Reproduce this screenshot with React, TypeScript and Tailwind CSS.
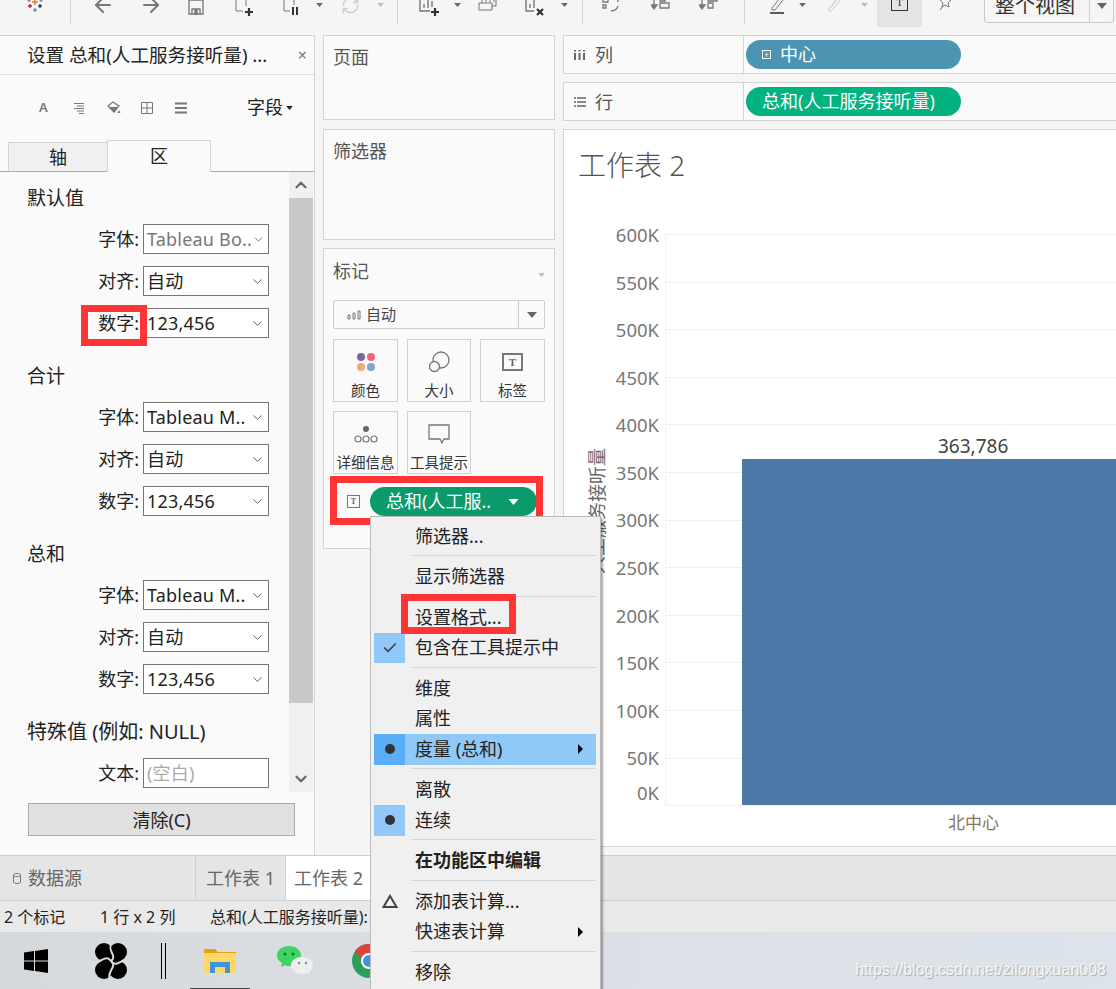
import { ArrowLeft, ArrowRight, Check, ChevronDown, ChevronUp, RefreshCw } from 'lucide-react';
import type { ReactNode } from 'react';

const ticks = ['600K', '550K', '500K', '450K', '400K', '350K', '300K', '250K', '200K', '150K', '100K', '50K', '0K'];

const formatGroups = [
  { title: '默认值', font: 'Tableau Bo..', muted: true },
  { title: '合计', font: 'Tableau M..', muted: false },
  { title: '总和', font: 'Tableau M..', muted: false },
];

function Caret({ className }: { className: string }) {
  return (
    <svg viewBox="0 0 10 6" className={className} fill="currentColor">
      <path d="M0 0h10L5 6z" />
    </svg>
  );
}

function Tool({ className, children }: { className: string; children?: ReactNode }) {
  return <div className={`flex items-center justify-center h-[24px] shrink-0 text-[#777] ${className}`}>{children}</div>;
}

function Divider() {
  return <div className="w-px h-[24px] bg-[#d2d2d2] shrink-0 self-start" />;
}

function Toolbar() {
  return (
    <div className="h-[35px] shrink-0 overflow-hidden flex items-start relative">
      <div className="flex items-start -mt-[7px] pt-[7px]">
        <Tool className="w-[70px] -mt-[7px]">
          <svg width="18" height="18" viewBox="0 0 18 18" strokeWidth="1.4">
            <path d="M9 3v6M6 6h6" stroke="#e8762b" />
            <path d="M4 8v4M2 10h4" stroke="#c72035" />
            <path d="M14 8v4M12 10h4" stroke="#1f447e" />
            <path d="M9 12v4M7 14h4" stroke="#7099a6" />
            <path d="M3 3v3M1.5 4.5h3M15 3v3M13.5 4.5h3" stroke="#8a8a9a" />
          </svg>
        </Tool>
        <Divider />
        <Tool className="w-[31px] -mt-[7px] ml-[16px]"><ArrowLeft size={24} strokeWidth={2} /></Tool>
        <Tool className="w-[31px] -mt-[7px] ml-[17px]"><ArrowRight size={24} strokeWidth={2} /></Tool>
        <Tool className="w-[20px] -mt-[5px] ml-[20px]">
          <svg width="16" height="16" viewBox="0 0 16 16" fill="none" stroke="currentColor" strokeWidth="1.3">
            <path d="M1 1h14v14H1zM4 15v-5h8v5" />
            <path d="M7 11h2v4H7z" fill="currentColor" />
          </svg>
        </Tool>
        <Tool className="w-[20px] -mt-[5px] ml-[28px]">
          <svg width="20" height="18" viewBox="0 0 20 18" fill="none" stroke="currentColor">
            <path d="M2 2v11h7M12 2v6" />
            <path d="M11 14h8M15 10v8" stroke="#333" strokeWidth="2.2" />
          </svg>
        </Tool>
        <Tool className="w-[20px] -mt-[5px] ml-[27px]">
          <svg width="20" height="18" viewBox="0 0 20 18" fill="none" stroke="currentColor">
            <path d="M3 2v11h6M13 2v5" />
            <path d="M12 9v8M16 9v8" stroke="#333" strokeWidth="2" />
          </svg>
        </Tool>
        <Tool className="w-[10px] -mt-[7px] ml-[13px]"><Caret className="w-[7px] h-[4px] text-[#666]" /></Tool>
        <Tool className="w-[20px] -mt-[7px] ml-[16px] text-[#d0d0d0]"><RefreshCw size={19} /></Tool>
        <Tool className="w-[10px] -mt-[7px] ml-[15px] text-[#bbb]"><Caret className="w-[7px] h-[4px]" /></Tool>
        <div className="ml-[12px]"><Divider /></div>
        <Tool className="w-[20px] -mt-[4px] ml-[21px]">
          <svg width="20" height="18" viewBox="0 0 20 18" fill="none" stroke="currentColor">
            <path d="M1 1v11h10M5 9V5M9 9V1M13 8V2" strokeWidth="1.4" />
            <path d="M12 13h8M16 9v8" stroke="#333" strokeWidth="2.2" />
          </svg>
        </Tool>
        <Tool className="w-[10px] -mt-[7px] ml-[13px]"><Caret className="w-[7px] h-[4px] text-[#666]" /></Tool>
        <Tool className="w-[20px] -mt-[6px] ml-[16px]">
          <svg width="20" height="16" viewBox="0 0 20 16" fill="none" stroke="currentColor">
            <path d="M1 5h13v7H1zM4 5V1h14v7h-4M8 1V4M12 1V4M16 1V4" />
          </svg>
        </Tool>
        <Tool className="w-[20px] -mt-[4px] ml-[27px]">
          <svg width="20" height="18" viewBox="0 0 20 18" fill="none" stroke="currentColor">
            <path d="M1 1v11h8M5 9V5M9 9V1" strokeWidth="1.4" />
            <path d="M12 10l6 6M18 10l-6 6" stroke="#333" strokeWidth="2.2" />
          </svg>
        </Tool>
        <Tool className="w-[10px] -mt-[7px] ml-[14px]"><Caret className="w-[7px] h-[4px] text-[#666]" /></Tool>
        <div className="ml-[13px]"><Divider /></div>
        <Tool className="w-[20px] -mt-[8px] ml-[18px]">
          <svg width="20" height="18" viewBox="0 0 20 18" fill="none" stroke="currentColor" strokeWidth="1.3">
            <path d="M2 2h5v5H2zM2 10h3v3H2zM10 1c4 0 7 2 7 6M17 11c-1 3-3 5-7 5" />
          </svg>
        </Tool>
        <Tool className="w-[20px] -mt-[8px] ml-[30px]">
          <svg width="20" height="18" viewBox="0 0 20 18" fill="none" stroke="currentColor" strokeWidth="1.3">
            <path d="M3 2v10" />
            <path d="M0 10h6l-3 4z" fill="currentColor" />
            <path d="M9 1h5v5H9zM9 8h9v5H9z" />
          </svg>
        </Tool>
        <Tool className="w-[20px] -mt-[8px] ml-[28px]">
          <svg width="20" height="18" viewBox="0 0 20 18" fill="none" stroke="currentColor" strokeWidth="1.3">
            <path d="M3 2v10" />
            <path d="M0 10h6l-3 4z" fill="currentColor" />
            <path d="M9 1h9v5H9zM9 8h5v5H9z" />
          </svg>
        </Tool>
        <div className="ml-[25px]"><Divider /></div>
        <Tool className="w-[20px] -mt-[6px] ml-[23px]">
          <svg width="20" height="18" viewBox="0 0 20 18" fill="none" stroke="currentColor">
            <path d="M4 11l8-10 3 2-8 10H4z" />
            <path d="M2 16h14" stroke="#333" strokeWidth="1.6" />
          </svg>
        </Tool>
        <Tool className="w-[10px] -mt-[7px] ml-[9px]"><Caret className="w-[7px] h-[4px] text-[#666]" /></Tool>
        <Tool className="w-[20px] -mt-[6px] ml-[17px] text-[#c8c8c8]">
          <svg width="16" height="18" viewBox="0 0 16 18" fill="none" stroke="currentColor">
            <path d="M3 12l7-9c2-2 4 0 3 2l-8 9c-1 1-3 0-2-2l7-8" />
          </svg>
        </Tool>
        <Tool className="w-[10px] -mt-[7px] ml-[15px] text-[#bbb]"><Caret className="w-[7px] h-[4px]" /></Tool>
        <div className="ml-[8px] -mt-[7px] w-[45px] h-[34px] bg-[#e4e4e4] flex items-center justify-center shrink-0">
          <div className="-mt-[16px] w-[17px] h-[17px] border border-[#333] flex items-center justify-center text-[11px] leading-none text-[#333] [font-family:'Liberation_Serif',serif]">T</div>
        </div>
        <Tool className="w-[20px] -mt-[9px] ml-[14px] text-[#666]">
          <svg width="14" height="16" viewBox="0 0 14 16" fill="none" stroke="currentColor">
            <path d="M7 1l1 3 4 1-3 3 1 4-4-2-3 2 1-4-3-3 4-1zM4 11l-3 4" />
          </svg>
        </Tool>
        <div className="ml-[28px] -mt-[7px] w-[130px] h-[30px] border border-[#c8c8c8] rounded-b-[3px] flex items-center shrink-0">
          <div className="w-[104px] pl-[10px] text-[20px] leading-[28px] text-[#333] -mt-[4px] whitespace-nowrap">整个视图</div>
          <div className="flex-1 h-full border-l border-[#d0d0d0] flex justify-center pt-[9px] text-[#666]">
            <Caret className="w-[10px] h-[6px]" />
          </div>
        </div>
      </div>
    </div>
  );
}

function FieldRow({ label, value, muted, placeholder }: { label: string; value: string; muted?: boolean; placeholder?: boolean }) {
  return (
    <div className="flex items-center h-[30px]">
      <span className="w-[139px] text-right text-[18px] text-[#222] whitespace-nowrap">{label}:</span>
      <div className="ml-[4px] w-[126px] h-[30px] bg-white border border-[#767676] flex items-center pl-[3px] pr-[3px]">
        <span className={`flex-1 text-[18px] whitespace-nowrap tracking-[0.2px] ${placeholder ? 'text-[#aaa]' : muted ? 'text-[#777]' : 'text-[#222]'}`}>{value}</span>
        {!placeholder && <ChevronDown size={15} strokeWidth={1.5} className="text-[#555]" />}
      </div>
    </div>
  );
}

function FormatPane() {
  return (
    <div className="w-[315px] shrink-0 bg-[#fafafa] border-t border-r border-[#d4d4d4] flex flex-col">
      <div className="h-[39px] shrink-0 border-b border-[#e0e0e0] flex items-center pl-[27px] pr-[7px]">
        <span className="flex-1 text-[18.6px] text-[#222] whitespace-nowrap">设置 总和(人工服务接听量) ...</span>
        <span className="text-[#777] text-[16px] leading-none">×</span>
      </div>
      <div className="h-[65px] shrink-0 flex items-center pl-[39px] pr-[21px] text-[#777]">
        <span className="w-[34px] text-[13px] font-semibold">A</span>
        <svg width="12" height="12" viewBox="0 0 12 12" stroke="currentColor" className="mr-[22px]">
          <path d="M1 1.5h10M4 4h7M1 6.5h10M4 9h7M6 11.5h5" />
        </svg>
        <svg width="14" height="14" viewBox="0 0 14 14" className="mr-[20px]" fill="currentColor">
          <path d="M1 5l5-4 6 4-5 6z" fill="none" stroke="currentColor" strokeWidth="1.2" />
          <path d="M2 6h9l-4 5zM12 9l1.5 3h-3z" />
        </svg>
        <svg width="12" height="12" viewBox="0 0 12 12" fill="none" stroke="currentColor" className="mr-[22px]">
          <path d="M.5.5h11v11H.5zM6 .5v11M.5 6h11" />
        </svg>
        <svg width="12" height="12" viewBox="0 0 12 12" stroke="currentColor" strokeWidth="2">
          <path d="M0 1.5h12M0 6h12M0 10.5h12" />
        </svg>
        <span className="ml-auto text-[18px] text-[#222]">字段</span>
        <Caret className="ml-[3px] w-[7px] h-[4px] text-[#222]" />
      </div>
      <div className="h-[32px] shrink-0 border-b border-[#aaa] pl-[8px] flex items-end">
        <div className="w-[99px] h-[29px] bg-[#f0f0f0] border-t border-l border-[#d4d4d4] flex items-center justify-center text-[18px] text-[#222]">轴</div>
        <div className="w-[104px] h-[32px] -mb-px bg-[#fafafa] border-t border-l border-r border-[#d4d4d4] flex items-center justify-center text-[18px] text-[#222]">区</div>
      </div>
      <div className="h-[620px] shrink-0 flex">
        <div className="w-[289px] shrink-0 pt-[13px]">
          {formatGroups.map((g) => (
            <div key={g.title} className="mb-[25px]">
              <div className="h-[26px] pl-[27px] text-[19px] leading-[26px] text-[#222]">{g.title}</div>
              <div className="mt-[13px] flex flex-col gap-[12px]">
                <FieldRow label="字体" value={g.font} muted={g.muted} />
                <FieldRow label="对齐" value="自动" />
                <FieldRow label="数字" value="123,456" />
              </div>
            </div>
          ))}
          <div className="h-[26px] pl-[27px] text-[20px] leading-[26px] text-[#222] whitespace-nowrap">特殊值 (例如: NULL)</div>
          <div className="mt-[13px]">
            <FieldRow label="文本" value="(空白)" placeholder />
          </div>
        </div>
        <div className="w-[24px] shrink-0 bg-[#f0f0f0] flex flex-col text-[#666]">
          <div className="h-[26px] flex items-center justify-center"><ChevronUp size={18} strokeWidth={3} /></div>
          <div className="h-[505px] bg-[#c8c8c8]" />
          <div className="flex-1 flex items-end justify-center pb-[4px]"><ChevronDown size={18} strokeWidth={3} /></div>
        </div>
      </div>
      <div className="ml-[28px] mt-[11px] w-[267px] h-[33px] pt-[1px] bg-[#e0e0e0] border border-[#aaa] flex items-center justify-center text-[18px] text-[#222]">清除(C)</div>
    </div>
  );
}

function MarkCard({ label, children }: { label: string; children: ReactNode }) {
  return (
    <div className="h-[63px] border border-[#d0d0d0] flex flex-col items-center justify-between pt-[9px] pb-[2px]">
      <div className="h-[26px] flex items-center justify-center">{children}</div>
      <span className="text-[14.5px] leading-[18px] text-[#333] whitespace-nowrap">{label}</span>
    </div>
  );
}

function Shelves() {
  return (
    <div className="w-[232px] ml-[8px] shrink-0 flex flex-col">
      <div className="h-[85px] bg-[#fafafa] border border-[#d4d4d4] pl-[9px] pt-[8px] text-[18px] text-[#555]">页面</div>
      <div className="h-[111px] mt-[9px] bg-[#fafafa] border border-[#d4d4d4] pl-[9px] pt-[8px] text-[18px] text-[#555]">筛选器</div>
      <div className="h-[301px] mt-[8px] bg-[#fafafa] border border-[#d4d4d4] pl-[9px] pr-[9px]">
        <div className="h-[51px] flex items-center justify-between text-[18px] text-[#555]">
          <span className="-mt-[6px]">标记</span>
          <Caret className="w-[7px] h-[4px] text-[#bbb]" />
        </div>
        <div className="h-[29px] bg-[#fafafa] border border-[#ccc] rounded-[2px] flex items-center">
          <svg width="14" height="10" viewBox="0 0 14 10" fill="none" stroke="#777" className="ml-[13px]">
            <path d="M1 5h2v4H1zM6 3h2v6H6zM11 1h2v8h-2z" />
          </svg>
          <span className="ml-[5px] text-[15px] text-[#444] flex-1">自动</span>
          <div className="w-[26px] h-full border-l border-[#ccc] flex items-center justify-center text-[#666]">
            <Caret className="w-[10px] h-[6px]" />
          </div>
        </div>
        <div className="mt-[10px] grid grid-cols-[65px_64px_65px] gap-x-[9px] gap-y-[9px]">
          <MarkCard label="颜色">
            <div className="grid grid-cols-2 gap-[2px]">
              <span className="w-[8px] h-[8px] rounded-full bg-[#7b6795]" />
              <span className="w-[8px] h-[8px] rounded-full bg-[#f0657e]" />
              <span className="w-[8px] h-[8px] rounded-full bg-[#f2a679]" />
              <span className="w-[8px] h-[8px] rounded-full bg-[#7ea6d0]" />
            </div>
          </MarkCard>
          <MarkCard label="大小">
            <svg width="22" height="22" viewBox="0 0 22 22" fill="none" stroke="#777" strokeWidth="1.3">
              <circle cx="13" cy="9" r="8" />
              <circle cx="6.5" cy="15.5" r="5" fill="#fafafa" />
            </svg>
          </MarkCard>
          <MarkCard label="标签">
            <div className="w-[21px] h-[18px] border-2 border-[#777] flex items-center justify-center text-[11px] font-bold leading-none text-[#666] [font-family:'Liberation_Serif',serif]">T</div>
          </MarkCard>
          <MarkCard label="详细信息">
            <svg width="24" height="18" viewBox="0 0 24 18" fill="none" stroke="#777" strokeWidth="1.2">
              <circle cx="12" cy="4" r="3" fill="#666" stroke="none" />
              <circle cx="4" cy="14" r="3" />
              <circle cx="12" cy="14" r="3" />
              <circle cx="20" cy="14" r="3" />
            </svg>
          </MarkCard>
          <MarkCard label="工具提示">
            <svg width="22" height="20" viewBox="0 0 22 20" fill="none" stroke="#777" strokeWidth="1.3">
              <path d="M1 1h20v14h-5l-2 4-2-4H1z" />
            </svg>
          </MarkCard>
        </div>
        <div className="mt-[13px] flex items-center h-[29px]">
          <div className="ml-[14px] w-[13px] h-[13px] shrink-0 border border-[#777] flex items-center justify-center text-[8px] font-bold leading-none text-[#666] [font-family:'Liberation_Serif',serif]">T</div>
          <div className="ml-[10px] w-[167px] h-[29px] shrink-0 rounded-full bg-[#0a9a6c] flex items-center pl-[16px] pr-[18px] text-white text-[18px] whitespace-nowrap">
            <span className="flex-1">总和(人工服..</span>
            <Caret className="w-[11px] h-[6px] text-white" />
          </div>
        </div>
      </div>
    </div>
  );
}

function ShelfRow({ label, icon, color, children }: { label: string; icon: ReactNode; color: string; children: ReactNode }) {
  return (
    <div className="h-[39px] bg-[#fafafa] border-t border-b border-l border-[#d4d4d4] flex items-center">
      <div className="w-[180px] h-full pt-[1px] border-r border-[#d4d4d4] flex items-center pl-[10px] text-[18px] text-[#555]">
        <span className="w-[21px] flex">{icon}</span>
        {label}
      </div>
      <div className={`ml-[2px] w-[215px] h-[29px] rounded-full flex items-center pl-[16px] text-white text-[18px] whitespace-nowrap ${color}`}>{children}</div>
    </div>
  );
}

function Chart() {
  return (
    <div className="h-[718px] mt-[8px] bg-white border-t border-b border-l border-[#d4d4d4] flex flex-col overflow-hidden">
      <div className="h-[104px] shrink-0 pl-[14px] pt-[15px] text-[28px] leading-[40px] font-light text-[#555] whitespace-nowrap">工作表 2</div>
      <div className="flex h-[571px] shrink-0">
        <div className="w-[43px] shrink-0">
          <span className="ml-[24px] mt-[214px] block [writing-mode:vertical-rl] [text-orientation:sideways] rotate-180 text-[18px] leading-[18px] text-[#666] whitespace-nowrap">人工服务接听量</span>
        </div>
        <div className="w-[52px] shrink-0 -mt-[23px] flex flex-col items-end">
          {ticks.map((t) => (
            <div key={t} className={`h-[47.6px] shrink-0 flex items-center text-[18.5px] text-[#777] ${t === '0K' ? '-translate-y-[13px]' : ''}`}>{t}</div>
          ))}
        </div>
        <div className="relative flex-1 ml-[6px] border-l border-[#f0f0f0] flex flex-col">
          {ticks.slice(1).map((t) => (
            <div key={t} className="h-[47.6px] shrink-0 border-t border-[#f0f0f0]" />
          ))}
          <div className="border-t border-[#f0f0f0]" />
          <div className="absolute left-[76px] right-0 bottom-0 h-[346px] bg-[#4e79a7]" />
          <div className="absolute left-[272px] bottom-[346px] text-[19px] leading-[26px] text-[#444]">363,786</div>
        </div>
      </div>
      <div className="pl-[384px] mt-[6px] text-[17px] leading-[24px] text-[#7f7660]">北中心</div>
    </div>
  );
}

function MenuItem({ label, bold, lead, arrow, active }: { label: string; bold?: boolean; lead?: ReactNode; arrow?: boolean; active?: boolean }) {
  return (
    <div className={`h-[30.5px] flex items-center text-[18px] text-[#222] mr-[4px] ml-[3px] ${active ? 'bg-[#90c8f8]' : ''}`}>
      <div className={`w-[31px] h-full flex items-center justify-center shrink-0 ${active ? 'bg-[#5aaef8]' : ''}`}>{lead}</div>
      <span className={`ml-[10px] flex-1 whitespace-nowrap ${bold ? 'font-bold' : ''}`}>{label}</span>
      {arrow && <span className="mr-[13px] w-0 h-0 border-y-[5px] border-y-transparent border-l-[5px] border-l-black" />}
    </div>
  );
}

function Sep() {
  return (
    <div className="h-[10px] pt-[3.5px] ml-[40px] mr-[4px]">
      <div className="h-px bg-[#d4d4d4]" />
    </div>
  );
}

const dot = <span className="w-[10px] h-[10px] rounded-full bg-[#333]" />;

function ContextMenu() {
  return (
    <div className="absolute left-[370px] top-[516px] w-[231px] h-[480px] bg-[#f0f0f0] border border-[#bbb] shadow-[2px_2px_2px_rgba(0,0,0,0.35)] pt-[4px]">
      <MenuItem label="筛选器..." />
      <Sep />
      <MenuItem label="显示筛选器" />
      <Sep />
      <MenuItem label="设置格式..." />
      <MenuItem
        label="包含在工具提示中"
        lead={
          <div className="w-full h-full bg-[#90c8f8] flex items-center justify-center">
            <Check size={16} strokeWidth={2.5} className="text-[#444]" />
          </div>
        }
      />
      <Sep />
      <MenuItem label="维度" />
      <MenuItem label="属性" />
      <MenuItem label="度量 (总和)" active arrow lead={dot} />
      <Sep />
      <MenuItem label="离散" />
      <MenuItem label="连续" lead={<div className="w-full h-full bg-[#90c8f8] flex items-center justify-center">{dot}</div>} />
      <Sep />
      <MenuItem label="在功能区中编辑" bold />
      <Sep />
      <MenuItem
        label="添加表计算..."
        lead={
          <svg width="16" height="14" viewBox="0 0 16 14" fill="none" stroke="#444" strokeWidth="2">
            <path d="M8 2l6.5 11h-13z" />
          </svg>
        }
      />
      <MenuItem label="快速表计算" arrow />
      <Sep />
      <MenuItem label="移除" />
    </div>
  );
}

function Taskbar() {
  return (
    <div className="h-[57px] shrink-0 bg-gradient-to-r from-[#d6d9dc] via-[#dbe0e6] to-[#dde3ea] flex items-center relative">
      <svg width="24" height="24" viewBox="0 0 24 24" fill="#000" className="ml-[24px]">
        <path d="M0 3.5l10-1.4v9.4H0zM11 2l13-2v11.5H11zM0 12.5h10v9.4L0 20.5zM11 12.5h13V24l-13-2z" />
      </svg>
      <svg width="32" height="36" viewBox="0 0 32 36" className="ml-[47px]">
        <circle cx="9" cy="9" r="9" fill="#000" />
        <circle cx="23" cy="9" r="9" fill="#000" />
        <circle cx="9" cy="27" r="9" fill="#000" />
        <circle cx="23" cy="27" r="9" fill="#000" />
        <rect x="6" y="8" width="20" height="20" fill="#000" />
        <g fill="none" stroke="#d8dbde" strokeWidth="2">
          <path d="M16 18C23 12 11 8 17 0" />
          <path d="M16 18C23 24 11 28 15 36" />
          <path d="M16 18C10 10 6 22 0 17" />
          <path d="M16 18C22 26 26 14 32 19" />
        </g>
      </svg>
      <div className="ml-[34px] w-[5px] h-[36px] border-x border-black" />
      <svg width="32" height="27" viewBox="0 0 32 27" className="ml-[38px]">
        <path d="M0 2h11l3 3h18v4H0z" fill="#e0a30f" />
        <path d="M0 6h32v20H0z" fill="#ffd767" />
        <path d="M6 26v-11h20v11h-5v-6H11v6z" fill="#3f95d8" />
      </svg>
      <svg width="36" height="30" viewBox="0 0 36 30" className="ml-[41px]">
        <path d="M12 0c7 0 12 4 12 10s-5 10-12 10c-1 0-3 0-4-1l-4 2 1-4C2 15 0 13 0 10 0 4 5 0 12 0z" fill="#3fd364" />
        <circle cx="8" cy="8" r="1.5" fill="#14743a" />
        <circle cx="16" cy="8" r="1.5" fill="#14743a" />
        <path d="M25 11c6 0 11 3 11 8 0 3-2 5-4 7l1 3-3-2c-2 .5-3 1-5 1-6 0-11-4-11-9s5-8 11-8z" fill="#eeeeee" />
        <circle cx="22" cy="17" r="1.2" fill="#888" />
        <circle cx="29" cy="17" r="1.2" fill="#888" />
      </svg>
      <svg width="34" height="34" viewBox="0 0 34 34" className="ml-[39px]">
        <circle cx="17" cy="17" r="17" fill="#2e9e5b" />
        <path d="M17 0a17 17 0 0 1 15 9H17a8 8 0 0 0-8 5L3 7a17 17 0 0 1 14-7z" fill="#db4437" />
        <path d="M32 9a17 17 0 0 1-15 25l7-11a8 8 0 0 0 0-14z" fill="#fbc02d" />
        <circle cx="17" cy="17" r="8" fill="#fff" />
        <circle cx="17" cy="17" r="6" fill="#4a90e2" />
      </svg>
      <div className="absolute left-[190px] bottom-0 w-[60px] h-px bg-[#444]" />
      <div className="absolute right-[10px] bottom-[7px] text-[16px] leading-[24px] text-white/80 [text-shadow:1px_1px_1px_rgba(0,0,0,0.25)] [font-family:'Liberation_Sans',sans-serif]">https://blog.csdn.net/zilongxuan008</div>
    </div>
  );
}

// red annotation frames that were drawn over the screenshot
function Annotations() {
  return (
    <>
      <div className="absolute left-[81px] top-[305px] w-[66px] h-[41px] border-[7px] border-[#ff3535]" />
      <div className="absolute left-[330px] top-[476px] w-[213px] h-[49px] border-[7px] border-[#ff3535]" />
    </>
  );
}

export default function App() {
  return (
    <div className="relative w-[1116px] h-[989px] overflow-hidden bg-[#f5f5f5] flex flex-col [font-family:'Noto_Sans','Noto_Sans_CJK_SC',sans-serif]">
      <Toolbar />
      <div className="flex h-[820px] shrink-0">
        <FormatPane />
        <Shelves />
        <div className="flex-1 ml-[8px] min-w-0">
          <ShelfRow
            label="列"
            color="bg-[#4b94b2]"
            icon={
              <svg width="11" height="11" viewBox="0 0 11 11" stroke="#666" strokeWidth="2">
                <path d="M1 3v7M5.5 3v7M10 3v7M1 0v1.5M5.5 0v1.5M10 0v1.5" />
              </svg>
            }
          >
            <span className="w-[9px] h-[9px] border border-white mr-[9px] flex items-center justify-center text-[8px] leading-none">+</span>
            中心
          </ShelfRow>
          <div className="mt-[8px]">
            <ShelfRow
              label="行"
              color="bg-[#02b380]"
              icon={
                <svg width="12" height="10" viewBox="0 0 12 10" stroke="#666" strokeWidth="1.6">
                  <path d="M0 1h2M3 1h9M0 5h2M3 5h9M0 9h2M3 9h9" />
                </svg>
              }
            >
              总和(人工服务接听量)
            </ShelfRow>
          </div>
          <Chart />
        </div>
      </div>
      <div className="h-[45px] shrink-0 bg-[#e5e5e5] border-t border-[#ccc] flex text-[18px] text-[#666]">
        <div className="w-[196px] border-r border-[#d0d0d0] flex items-center pl-[13px]">
          <svg width="8" height="11" viewBox="0 0 8 11" fill="none" stroke="#777" className="mr-[7px]">
            <path d="M.5 2c0-2 7-2 7 0v7c0 2-7 2-7 0zM.5 2.5c0 1.5 7 1.5 7 0" />
          </svg>
          数据源
        </div>
        <div className="w-[90px] border-r border-[#d0d0d0] flex items-center justify-center whitespace-nowrap">工作表 1</div>
        <div className="w-[90px] bg-white flex items-center pl-[8px] whitespace-nowrap">工作表 2</div>
      </div>
      <div className="h-[32px] shrink-0 bg-[#e9e9e9] border-t border-[#d0d0d0] flex items-center text-[16px] text-[#222] whitespace-nowrap">
        <span className="w-[100px] pl-[4px]">2 个标记</span>
        <span className="w-[110px]">1 行 x 2 列</span>
        <span>总和(人工服务接听量):</span>
      </div>
      <Taskbar />
      <Annotations />
      <ContextMenu />
      <div className="absolute left-[401px] top-[594px] w-[115px] h-[40px] border-[7px] border-[#ff3535]" />
    </div>
  );
}
